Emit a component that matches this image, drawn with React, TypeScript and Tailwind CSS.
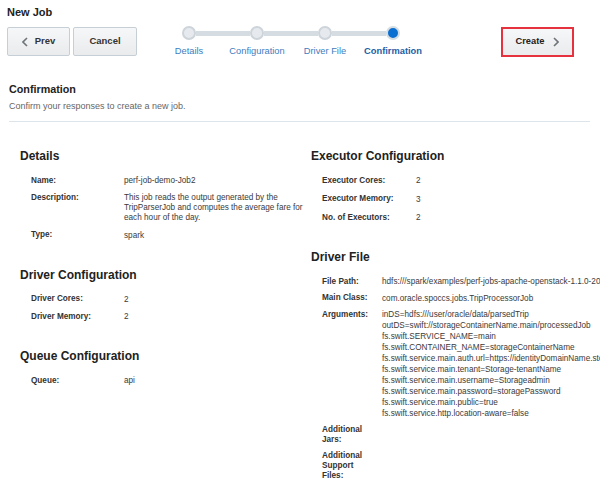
import React from "react";

type Field = { label: string; value: React.ReactNode; tight?: boolean };

const steps = ["Details", "Configuration", "Driver File", "Confirmation"];

function Chevron({ dir }: { dir: "left" | "right" }) {
  return (
    <svg width="6" height="10" viewBox="0 0 6 10" className="shrink-0">
      <polyline
        points={dir === "left" ? "5,1 1,5 5,9" : "1,1 5,5 1,9"}
        fill="none"
        stroke="#6f7479"
        strokeWidth="1.6"
      />
    </svg>
  );
}

function Train() {
  return (
    <div className="flex">
      {steps.map((s, i) => {
        const active = i === steps.length - 1;
        return (
          <div key={s} className="w-[68px] flex flex-col items-center">
            <div className="flex items-center w-full h-[14px]">
              <div className={`flex-1 h-[5px] ${i === 0 ? "" : "bg-[#d5dce2]"}`} />
              <div
                className={`w-[14px] h-[14px] rounded-full border-2 ${
                  active ? "bg-[#0a6fd0] border-[#d5dce2]" : "bg-[#e6eaee] border-[#cdd4da]"
                }`}
              />
              <div className={`flex-1 h-[5px] ${active ? "" : "bg-[#d5dce2]"}`} />
            </div>
            <div
              className={`mt-[5px] text-[9.3px] leading-[12px] whitespace-nowrap ${
                active ? "font-bold text-[#1b5ea6]" : "text-[#3d7dbf]"
              }`}
            >
              {s}
            </div>
          </div>
        );
      })}
    </div>
  );
}

function Section({
  title,
  fields,
  labelWidth,
  first,
  nowrap,
  rowGap = "gap-[6.5px]",
}: {
  title: string;
  fields: Field[];
  labelWidth: string;
  first?: boolean;
  nowrap?: boolean;
  rowGap?: string;
}) {
  return (
    <div className={first ? "" : "mt-[27px]"}>
      <h3 className="text-[12px] leading-[14px] font-bold text-[#222]">{title}</h3>
      <div className={`mt-[12px] pl-[11px] flex flex-col ${rowGap}`}>
        {fields.map((f) => (
          <div key={f.label} className="flex text-[8.2px]">
            <div className={`${labelWidth} shrink-0 font-bold leading-[10px] pt-[0.5px] text-[#333]`}>{f.label}</div>
            <div
              className={`text-[#3a3a3a] ${f.tight ? "leading-[10px] pt-[0.5px]" : "leading-[11px]"} ${
                nowrap ? "whitespace-nowrap" : ""
              }`}
            >
              {f.value}
            </div>
          </div>
        ))}
      </div>
    </div>
  );
}

export default function App() {
  const args = [
    "inDS=hdfs:///user/oracle/data/parsedTrip",
    "outDS=swift://storageContainerName.main/processedJob",
    "fs.swift.SERVICE_NAME=main",
    "fs.swift.CONTAINER_NAME=storageContainerName",
    "fs.swift.service.main.auth.url=https://identityDomainName.storage.oraclecloud.com/auth/v1.0",
    "fs.swift.service.main.tenant=Storage-tenantName",
    "fs.swift.service.main.username=Storageadmin",
    "fs.swift.service.main.password=storagePassword",
    "fs.swift.service.main.public=true",
    "fs.swift.service.http.location-aware=false",
  ];

  return (
    <div className="w-[600px] h-[481px] overflow-hidden bg-white text-[#333] font-['Liberation_Sans',Arial,sans-serif]">
      <h1 className="pl-[7px] pt-[5px] text-[11px] leading-[14px] font-bold text-[#222]">New Job</h1>

      {/* toolbar */}
      <div className="flex items-start mt-[7px] pl-[7px]">
        <div className="flex mt-[1px] gap-[3px]">
          <button className="w-[63px] h-[29px] flex items-center justify-center gap-[7px] rounded-[2px] border border-[#c7cfd6] bg-gradient-to-b from-[#f6f7f8] to-[#e9ebed] text-[9.5px] font-bold text-[#333]">
            <Chevron dir="left" />
            Prev
          </button>
          <button className="w-[64px] h-[29px] flex items-center justify-center rounded-[2px] border border-[#c7cfd6] bg-gradient-to-b from-[#f6f7f8] to-[#e9ebed] text-[9.5px] font-bold text-[#333]">
            Cancel
          </button>
        </div>
        <div className="ml-[18px]">
          <Train />
        </div>
        <div className="ml-[74px] mt-[1px] w-[73px] h-[30px] border-2 border-[#e5323e]">
          <button className="w-full h-full flex items-center justify-center gap-[9px] bg-gradient-to-b from-[#f6f7f8] to-[#e9ebed] text-[9.3px] font-bold text-[#222]">
            Create
            <Chevron dir="right" />
          </button>
        </div>
      </div>

      {/* confirmation header */}
      <div className="pl-[9px] pr-[10px] mt-[25px]">
        <h2 className="text-[10.75px] leading-[14px] font-bold text-[#222]">Confirmation</h2>
        <p className="mt-[4px] text-[9px] leading-[12px] text-[#666]">
          Confirm your responses to create a new job.
        </p>
        <div className="mt-[9px] h-px bg-[#dde4ea]" />
      </div>

      {/* summary */}
      <div className="flex pl-[20px] mt-[27px]">
        <div className="w-[291px] shrink-0">
          <Section
            first
            title="Details"
            labelWidth="w-[93px]"
            fields={[
              { label: "Name:", value: "perf-job-demo-Job2" },
              {
                label: "Description:",
                tight: true,
                value: (
                  <>
                    This job reads the output generated by the
                    <br />
                    TripParserJob and computes the average fare for
                    <br />
                    each hour of the day.
                  </>
                ),
              },
              { label: "Type:", value: "spark" },
            ]}
          />
          <Section
            title="Driver Configuration"
            labelWidth="w-[93px]"
            fields={[
              { label: "Driver Cores:", value: "2" },
              { label: "Driver Memory:", value: "2" },
            ]}
          />
          <Section title="Queue Configuration" labelWidth="w-[93px]" fields={[{ label: "Queue:", value: "api" }]} />
        </div>
        <div className="flex-1 min-w-0">
          <Section
            first
            title="Executor Configuration"
            labelWidth="w-[94px]"
            rowGap="gap-[7.5px]"
            fields={[
              { label: "Executor Cores:", value: "2" },
              { label: "Executor Memory:", value: "3" },
              { label: "No. of Executors:", value: "2" },
            ]}
          />
          <Section
            title="Driver File"
            labelWidth="w-[50px] mr-[10px]"
            rowGap="gap-[5.5px]"
            nowrap
            fields={[
              { label: "File Path:", value: "hdfs:///spark/examples/perf-jobs-apache-openstack-1.1.0-20160301.jar" },
              { label: "Main Class:", value: "com.oracle.spoccs.jobs.TripProcessorJob" },
              {
                label: "Arguments:",
                value: (
                  <>
                    {args.map((a) => (
                      <div key={a}>{a}</div>
                    ))}
                  </>
                ),
              },
              { label: "Additional Jars:", value: "" },
              { label: "Additional Support Files:", value: "" },
            ]}
          />
        </div>
      </div>
    </div>
  );
}
